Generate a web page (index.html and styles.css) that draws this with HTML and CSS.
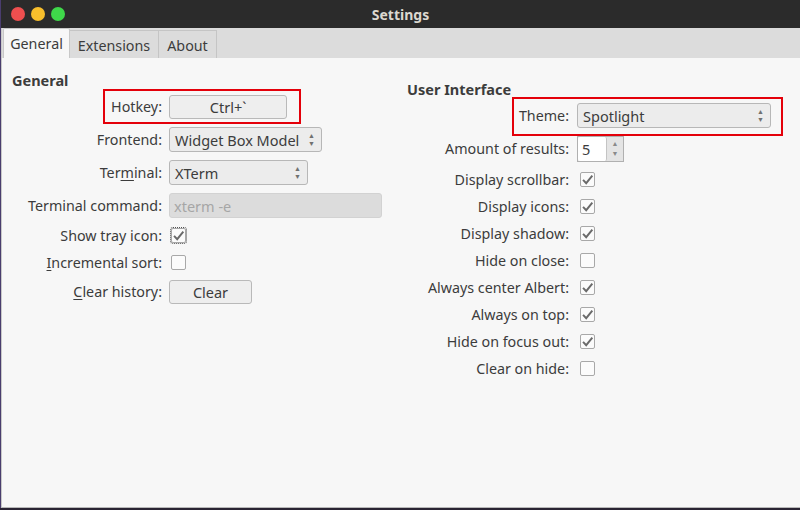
FILE: index.html
```html
<!DOCTYPE html>
<html>
<head>
<meta charset="utf-8">
<link rel="stylesheet" href="styles.css">
</head>
<body>
<div class="window">
  <div class="titlebar">
    <div class="lights">
      <span class="light red"></span>
      <span class="light yellow"></span>
      <span class="light green"></span>
    </div>
    <div class="title">Settings</div>
  </div>
  <div class="tabbar">
    <div class="tab active t-general">General</div>
    <div class="tab t-ext">Extensions</div>
    <div class="tab t-about">About</div>
  </div>
  <div class="panel">
    <div class="col left">
      <div class="heading">General</div>
      <div class="row r33">
        <div class="label">Hotkey:</div>
        <div class="btn hotkey">Ctrl+`</div>
        <div class="mark mark-hotkey"></div>
      </div>
      <div class="row r33">
        <div class="label">Frontend:</div>
        <div class="combo frontend"><span>Widget Box Model</span><span class="arrows">▲<br>▼</span></div>
      </div>
      <div class="row r33">
        <div class="label">Ter<u>m</u>inal:</div>
        <div class="combo terminal"><span>XTerm</span><span class="arrows">▲<br>▼</span></div>
      </div>
      <div class="row r33">
        <div class="label">Terminal command:</div>
        <div class="input disabled">xterm -e</div>
      </div>
      <div class="row r27">
        <div class="label">Show tray icon:</div>
        <div class="check focus"><svg viewBox="0 0 14 14" width="14" height="14"><path d="M2.2 6.8 L5.6 10.4 L12.2 2.4" fill="none" stroke="#6a6a6a" stroke-width="2.1"/></svg></div>
      </div>
      <div class="row r27">
        <div class="label"><u>I</u>ncremental sort:</div>
        <div class="check"></div>
      </div>
      <div class="row r31">
        <div class="label"><u>C</u>lear history:</div>
        <div class="btn clear">Clear</div>
      </div>
    </div>
    <div class="col right">
      <div class="heading">User Interface</div>
      <div class="row r33">
        <div class="label">Theme:</div>
        <div class="combo theme"><span>Spotlight</span><span class="arrows">▲<br>▼</span></div>
        <div class="mark mark-theme"></div>
      </div>
      <div class="row r33">
        <div class="label">Amount of results:</div>
        <div class="spin"><span class="val">5</span><span class="spin-arrows">▲<br>▼</span></div>
      </div>
      <div class="row r27 first">
        <div class="label">Display scrollbar:</div>
        <div class="check"><svg viewBox="0 0 14 14" width="14" height="14"><path d="M2.2 6.8 L5.6 10.4 L12.2 2.4" fill="none" stroke="#6a6a6a" stroke-width="2.1"/></svg></div>
      </div>
      <div class="row r27">
        <div class="label">Display icons:</div>
        <div class="check"><svg viewBox="0 0 14 14" width="14" height="14"><path d="M2.2 6.8 L5.6 10.4 L12.2 2.4" fill="none" stroke="#6a6a6a" stroke-width="2.1"/></svg></div>
      </div>
      <div class="row r27">
        <div class="label">Display shadow:</div>
        <div class="check"><svg viewBox="0 0 14 14" width="14" height="14"><path d="M2.2 6.8 L5.6 10.4 L12.2 2.4" fill="none" stroke="#6a6a6a" stroke-width="2.1"/></svg></div>
      </div>
      <div class="row r27">
        <div class="label">Hide on close:</div>
        <div class="check"></div>
      </div>
      <div class="row r27">
        <div class="label">Always center Albert:</div>
        <div class="check"><svg viewBox="0 0 14 14" width="14" height="14"><path d="M2.2 6.8 L5.6 10.4 L12.2 2.4" fill="none" stroke="#6a6a6a" stroke-width="2.1"/></svg></div>
      </div>
      <div class="row r27">
        <div class="label">Always on top:</div>
        <div class="check"><svg viewBox="0 0 14 14" width="14" height="14"><path d="M2.2 6.8 L5.6 10.4 L12.2 2.4" fill="none" stroke="#6a6a6a" stroke-width="2.1"/></svg></div>
      </div>
      <div class="row r27">
        <div class="label">Hide on focus out:</div>
        <div class="check"><svg viewBox="0 0 14 14" width="14" height="14"><path d="M2.2 6.8 L5.6 10.4 L12.2 2.4" fill="none" stroke="#6a6a6a" stroke-width="2.1"/></svg></div>
      </div>
      <div class="row r27">
        <div class="label">Clear on hide:</div>
        <div class="check"></div>
      </div>
    </div>
  </div>
</div>
</body>
</html>
```
FILE: styles.css
```css
* { box-sizing: border-box; }
html, body {
  margin: 0;
  padding: 0;
  width: 800px;
  height: 510px;
  overflow: hidden;
  background: #2a2433;
}
body {
  font-family: "Noto Sans", "Open Sans", sans-serif;
  font-size: 14px;
  color: #3c3c3c;
}
.window {
  width: 800px;
  height: 508px;
  display: flex;
  flex-direction: column;
  border-left: 1px solid #4a3d6e;
}
.titlebar {
  height: 28px;
  background: #2b2b2b;
  display: flex;
  align-items: center;
  position: relative;
  padding-left: 10px;
}
.lights { display: flex; gap: 6px; }
.light {
  width: 14px;
  height: 14px;
  border-radius: 50%;
  display: block;
}
.red { background: #ee4f4f; }
.yellow { background: #f8bf2c; }
.green { background: #3fd84a; }
.title {
  position: absolute;
  left: 0;
  right: 0;
  text-align: center;
  font-weight: bold;
  font-size: 14px;
  color: #dcd8d0;
  pointer-events: none;
}
.tabbar {
  height: 30px;
  background: #dcdcdc;
  display: flex;
  align-items: flex-end;
  padding-left: 1px;
  border-left: 1px solid #c9c9c9;
}
.tab {
  height: 28px;
  display: flex;
  align-items: center;
  justify-content: center;
  padding-top: 2px;
  font-size: 14.3px;
  border: 1px solid #c5c5c5;
  border-bottom: none;
  background: #dcdcdc;
  margin-left: -1px;
  color: #3c3c3c;
}
.t-general { width: 67px; }
.t-ext { width: 90px; }
.t-about { width: 59px; }
.tab.active {
  height: 30px;
  padding-top: 0;
  background: #f7f7f7;
  border-color: #c8c8c8;
  border-radius: 2px 2px 0 0;
  margin-left: 0;
  z-index: 1;
}
.panel {
  flex: 1;
  background: #f7f7f7;
  display: flex;
  border-left: 1px solid #c8c8c8;
  border-bottom: 1px solid #b8b8b8;
}
.col { display: flex; flex-direction: column; }
.col.left { width: 394px; padding-left: 10px; padding-top: 11.5px; }
.col.right { padding-left: 12px; padding-top: 20.5px; }
.heading {
  font-weight: bold;
  font-size: 14.5px;
  height: 20px;
  line-height: 20px;
  margin-bottom: 0.5px;
}
.right .heading { margin-left: -1px; }
.row {
  display: grid;
  grid-template-columns: 150px auto;
  column-gap: 7px;
  align-items: center;
  position: relative;
}
.right .row { grid-template-columns: 161px auto; column-gap: 8px; }
.r33 { height: 33px; }
.r27 { height: 27px; }
.r31 { height: 31px; }
.right .first { margin-top: 1px; }
.label {
  text-align: right;
  white-space: nowrap;
  font-size: 14.3px;
}
.label u { text-underline-offset: 2px; }
.btn {
  height: 24px;
  border: 1px solid #b9b9b9;
  border-radius: 3px;
  background: #eeeeee;
  display: flex;
  align-items: center;
  justify-content: center;
  font-size: 14.5px;
}
.hotkey { width: 118px; }
.clear { width: 83px; }
.combo {
  height: 25px;
  border: 1px solid #b7b7b7;
  border-radius: 3px;
  background: #ececec;
  display: flex;
  align-items: center;
  justify-content: space-between;
  padding: 0 6px 0 5px;
  font-size: 14.5px;
}
.arrows {
  font-size: 7px;
  line-height: 8px;
  color: #707070;
  text-align: center;
}
.frontend { width: 153px; }
.terminal { width: 139px; }
.theme { width: 194px; }
.input {
  height: 25px;
  width: 213px;
  border-radius: 3px;
  display: flex;
  align-items: center;
  padding-left: 4px;
  font-size: 14.5px;
}
.input.disabled {
  background: #dcdcdc;
  border: 1px solid #d2d2d2;
  color: #a6a6a6;
}
.check {
  width: 15px;
  height: 15px;
  border: 1px solid #a8a8a8;
  border-radius: 2px;
  background: #fbfbfb;
  margin-left: 2px;
  display: flex;
  align-items: center;
  justify-content: center;
}
.right .check { margin-left: 3px; }
.check svg { display: block; }
.check.focus { outline: 1px dotted #555; outline-offset: 0; }
.spin {
  width: 47px;
  height: 26px;
  display: flex;
  border: 1px solid #b0b0b0;
  background: #e4e4e4;
}
.spin .val {
  width: 29px;
  background: #ffffff;
  border-right: 1px solid #c4c4c4;
  border-radius: 2px;
  display: flex;
  align-items: center;
  padding-left: 4px;
  font-size: 14.5px;
}
.spin-arrows {
  flex: 1;
  font-size: 7px;
  line-height: 10px;
  color: #8a8a8a;
  text-align: center;
  padding-top: 2px;
}
.mark {
  position: absolute;
  border: 2px solid #e4000a;
  pointer-events: none;
}
.mark-hotkey { left: 91px; top: -1px; width: 198px; height: 35px; }
.mark-theme { left: 104px; top: -2px; width: 271px; height: 39px; }
```
